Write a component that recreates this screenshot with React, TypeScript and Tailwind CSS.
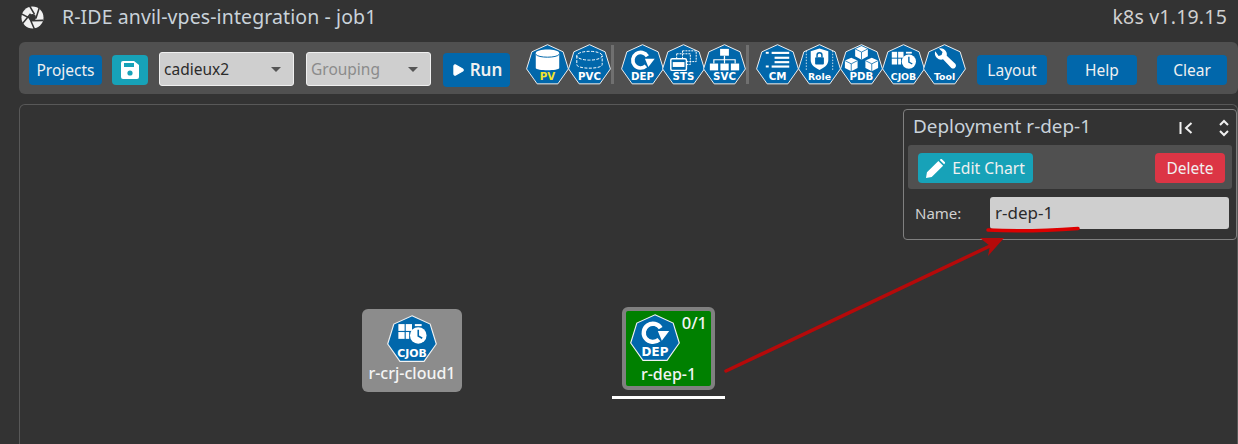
import * as React from "react"
import { Play } from "lucide-react"

function Hex({ label, labelClass = "fill-white", size = 43, children }: { label: string; labelClass?: string; size?: number; children?: React.ReactNode }) {
  return (
    <svg viewBox="0 0 44 42" width={size} height={(size * 42) / 44} className="shrink-0">
      <polygon points="22,0.7 38,8 43.4,25.5 32.6,40.8 11.4,40.8 0.6,25.5 6,8" fill="#0167ab" stroke="#f2f2f2" strokeWidth="1" />
      {children}
      <text x="22" y="36.8" textAnchor="middle" className={labelClass} fontFamily="'DejaVu Sans', sans-serif" fontWeight="700" fontSize={label.length > 3 ? 9.6 : 10.5}>
        {label}
      </text>
    </svg>
  )
}

function DepGlyph() {
  return (
    <g>
      <path d="M25.500 22.500A8 8 0 1 1 27 12.500" fill="none" stroke="#fff" strokeWidth="3.800" />
      <path d="M24.500 15H34.500L28 23.500z" fill="#fff" />
    </g>
  )
}

function CjobGlyph() {
  return (
    <g fill="#fff">
      <rect x="10" y="8" width="5.500" height="6" />
      <rect x="16.500" y="8" width="5.500" height="6" />
      <rect x="10" y="15" width="5.500" height="6" />
      <rect x="16.500" y="15" width="3" height="6" />
      <rect x="24.500" y="8" width="6" height="1.800" />
      <circle cx="27.500" cy="18" r="7.300" />
      <path d="M27.500 13v5.500l3.500 2" fill="none" stroke="#0167ab" strokeWidth="1.400" />
    </g>
  )
}

function Cube({ x, y }: { x: number; y: number }) {
  return (
    <g transform={`translate(${x} ${y})`}>
      <path d="M6.500 0l6.500 3v7.500L6.500 14 0 10.500V3z" fill="#fff" />
      <path d="M0 3l6.500 3.300L13 3M6.500 6.300V14" fill="none" stroke="#0167ab" strokeWidth="0.800" />
    </g>
  )
}

function HexBar() {
  return (
    <div className="flex items-center">
      <Hex label="PV" labelClass="fill-[#f2e52c]">
        <path d="M10 9.500c0-5 24-5 24 0v15c0 3-24 3-24 0z" fill="#fff" />
        <path d="M10 10.500c2 4 22 4 24 0" fill="none" stroke="#0167ab" strokeWidth="1" />
      </Hex>
      <div className="-ml-[1px]">
        <Hex label="PVC">
          <g fill="none" stroke="#fff" strokeWidth="1" strokeDasharray="3 1.500">
            <ellipse cx="22" cy="12" rx="13" ry="4.500" />
            <path d="M9 12v9c0 5 26 5 26 0v-9" />
          </g>
        </Hex>
      </div>
      <div className="mr-[7px] h-[39px] w-[3px] bg-[#707070]" />
      <Hex label="DEP">
        <DepGlyph />
      </Hex>
      <div className="-ml-[2px]">
        <Hex label="STS">
          <g fill="none" stroke="#fff" strokeWidth="1">
            <rect x="21" y="7" width="14" height="11" strokeDasharray="2 1" />
            <rect x="15" y="10" width="14" height="11" strokeDasharray="2 1" />
          </g>
          <rect x="9" y="15" width="16" height="12" rx="1.500" fill="#0167ab" stroke="#fff" strokeWidth="1.500" />
          <rect x="11" y="18.500" width="12" height="5" fill="#fff" />
        </Hex>
      </div>
      <div className="-ml-[2px]">
        <Hex label="SVC">
          <g fill="#fff">
            <rect x="17.500" y="5" width="9" height="7" />
            <rect x="7" y="20" width="8.500" height="7" />
            <rect x="17.800" y="20" width="8.500" height="7" />
            <rect x="28.500" y="20" width="8.500" height="7" />
            <path d="M21.400 12h1.200v3.500H33.500V20h-1.200v-3.300h-9.700V20h-1.200v-3.300h-9.700V20h-1.200v-4.500h10.700z" />
          </g>
        </Hex>
      </div>
      <div className="mr-[7px] h-[39px] w-[3px] bg-[#707070]" />
      <Hex label="CM">
        <g fill="#fff">
          <rect x="10" y="8" width="3" height="2" />
          <rect x="10" y="22" width="3" height="2" />
          <rect x="16" y="8" width="18" height="2.200" />
          <rect x="19" y="13" width="15" height="2.200" />
          <rect x="19" y="17.500" width="15" height="2.200" />
          <rect x="16" y="22" width="18" height="2.200" />
        </g>
      </Hex>
      <div className="-ml-[1px]">
        <Hex label="Role">
          <path d="M22 4.500l9 3v9c0 5-4 8-9 10-5-2-9-5-9-10v-9z" fill="#fff" />
          <rect x="17.500" y="13.500" width="9" height="7.500" rx="1" fill="#0167ab" />
          <path d="M19.500 13.500v-2a2.500 2.500 0 0 1 5 0v2" fill="none" stroke="#0167ab" strokeWidth="1.500" />
          <path d="M8.500 7v20M35.500 7v20" stroke="#fff" strokeWidth="0.800" strokeDasharray="1.500 1.500" />
        </Hex>
      </div>
      <div className="-ml-[1px]">
        <Hex label="PDB">
          <Cube x={15.500} y={2} />
          <Cube x={5} y={14} />
          <Cube x={26} y={14} />
        </Hex>
      </div>
      <div className="-ml-[1px]">
        <Hex label="CJOB">
          <CjobGlyph />
        </Hex>
      </div>
      <div className="-ml-[2px]">
        <Hex label="Tool">
          <path d="M12.500 7.500a6.500 6.500 0 0 0 8 8.200L29 24.500a3 3 0 0 0 4.300-4l-9-8.500a6.500 6.500 0 0 0-8-7.500l3.700 3.700-1 3-3 1z" fill="#fff" />
        </Hex>
      </div>
    </div>
  )
}

function BlueButton({ children, className = "" }: { children: React.ReactNode; className?: string }) {
  return <button type="button" className={`mt-[13px] h-[30px] rounded-[4px] bg-[#0167ab] pt-[2px] text-[15.500px] text-[#f0f0f0] ${className}`}>{children}</button>
}

function FakeSelect({ value, className }: { value: string; className: string }) {
  return (
    <div className={`mt-[10px] flex h-[34px] items-center justify-between rounded-[3px] border border-[#f0f0f0] bg-[#cfcfcf] pl-[4px] pr-[12px] text-[15.500px] ${className}`}>
      <span className="pt-[1px]">{value}</span>
      <span className="h-0 w-0 border-x-[5px] border-t-[5px] border-x-transparent border-t-[#555]" />
    </div>
  )
}

export default function App() {
  return (
    <div className="relative h-[444px] w-[1238px] overflow-hidden bg-[#333333] font-['Noto_Sans',sans-serif] text-[#d8d8d8]">
      <header className="flex h-[42px] items-start justify-between pl-[21px] pr-[11px] pt-[4px]">
        <div className="flex items-center gap-[18px]">
          <svg viewBox="0 0 24 24" width="23" height="23" className="mt-[1px]">
            <circle cx="12" cy="12" r="11.500" fill="#f0f0f0" />
            <g stroke="#333" strokeWidth="1.600">
              <path d="M14 8.500L9 0M15.500 13L19 2M11 15.500L23 15M8.500 11.500L14 24M10 8L1 19M13.500 15L0 8" />
            </g>
            <circle cx="12" cy="12" r="3.600" fill="#333" />
          </svg>
          <span className="text-[19.500px] leading-[26px] tracking-[0.1px] text-[#c9d2da]">R-IDE anvil-vpes-integration - job1</span>
        </div>
        <span className="text-[19.500px] leading-[26px] tracking-[0.2px] text-[#d0d0d0]">k8s v1.19.15</span>
      </header>

      <div className="ml-[19px] flex h-[52px] items-start rounded-[6px] bg-[#505050] pl-[10px]">
        <BlueButton className="w-[73px]">Projects</BlueButton>
        <button type="button" className="ml-[10px] mt-[13px] flex h-[30px] w-[36px] items-center justify-center rounded-[4px] bg-[#17a2b8]">
          <svg viewBox="0 0 18 18" width="18" height="18">
            <path d="M2 0h11l5 4v12a2 2 0 0 1-2 2H2a2 2 0 0 1-2-2V2a2 2 0 0 1 2-2z" fill="#fff" />
            <rect x="3" y="2" width="10" height="4" fill="#17a2b8" />
            <circle cx="9" cy="12" r="2.600" fill="#17a2b8" />
          </svg>
        </button>
        <FakeSelect value="cadieux2" className="ml-[11px] w-[135px] text-[#2b2b2b]" />
        <FakeSelect value="Grouping" className="ml-[12px] w-[125px] text-[#8b8b8b]" />
        <button type="button" className="ml-[12px] mt-[11px] flex h-[34px] w-[67px] items-center justify-center gap-[5px] rounded-[4px] bg-[#0167ab] text-[17px] font-semibold text-[#f0f0f0]">
          <Play size={14} fill="#fff" stroke="#fff" />
          Run
        </button>
        <div className="ml-[16px] mt-[2px]">
          <HexBar />
        </div>
        <BlueButton className="ml-[11px] w-[70px]">Layout</BlueButton>
        <BlueButton className="ml-[20px] w-[70px]">Help</BlueButton>
        <BlueButton className="ml-[20px] w-[70px]">Clear</BlueButton>
      </div>

      <main className="relative ml-[19px] mt-[10px] h-[360px] rounded-t-[6px] border border-b-0 border-[#585858]">
        <section className="absolute right-0 top-[4px] w-[334px] rounded-[4px] border border-[#808080] bg-[#333333] px-[4px]">
          <div className="flex h-[35px] items-center justify-between pb-[2px] pl-[5px] pr-[3px]">
            <span className="text-[18.900px] text-[#c9d2da]">Deployment r-dep-1</span>
            <div className="flex items-center gap-[26px] pt-[2px]">
              <svg viewBox="0 0 14 12" width="14" height="12" fill="none" stroke="#f0f0f0" strokeWidth="2">
                <path d="M1.500 0v12M12.500 1L7 6l5.500 5" />
              </svg>
              <svg viewBox="0 0 10 18" width="10" height="18" fill="none" stroke="#f0f0f0" strokeWidth="2">
                <path d="M1 6l4-4 4 4M1 12l4 4 4-4" />
              </svg>
            </div>
          </div>
          <div className="flex h-[44px] items-center justify-between rounded-[3px] bg-[#505050] pl-[10px] pr-[7px] pt-[2px]">
            <button type="button" className="flex h-[30px] w-[115px] items-center justify-center gap-[7px] rounded-[4px] bg-[#17a2b8] pt-[1px] text-[15.700px] text-[#f0f0f0]">
              <svg viewBox="0 0 20 20" width="19" height="19" fill="#fff">
                <path d="M0 20l1-6L13 2l5 5L6 19zM14.500 1l1-1h1l3.500 3.500v1l-1 1z" />
              </svg>
              Edit Chart
            </button>
            <button type="button" className="h-[30px] w-[70px] rounded-[4px] bg-[#dc3545] pt-[1px] text-[15.500px] text-[#f0f0f0]">Delete</button>
          </div>
          <div className="flex items-center pb-[10px] pt-[8px]">
            <span className="w-[82px] pl-[7px] text-[15px] text-[#d0d0d0]">Name:</span>
            <div className="flex h-[32px] w-[239px] items-center rounded-[3px] bg-[#cfcfcf] pl-[5px] text-[17px] text-[#2b2b2b]">r-dep-1</div>
          </div>
        </section>

        <div className="absolute left-[342px] top-[204px] flex h-[83px] w-[100px] flex-col items-center rounded-[6px] bg-[#8c8c8c] pt-[6px]">
          <Hex label="CJOB" size={50}>
            <CjobGlyph />
          </Hex>
          <span className="text-[16px] font-medium leading-[20px] text-[#f4f4f4]">r-crj-cloud1</span>
        </div>

        <div className="absolute left-[602px] top-[202px] h-[83px] w-[93px] rounded-[6px] border-[4px] border-[#808080] bg-[#008000]">
          <div className="absolute left-[4px] top-[3px]">
            <Hex label="DEP" size={50}>
              <DepGlyph />
            </Hex>
          </div>
          <span className="absolute right-[4px] top-[2px] text-[16.500px] font-medium leading-[20px] text-[#f4f4f4]">0/1</span>
          <span className="absolute inset-x-0 bottom-[2px] text-center text-[16px] font-medium leading-[20px] text-[#f4f4f4]">r-dep-1</span>
        </div>
        <div className="absolute left-[592px] top-[291px] h-[3px] w-[113px] bg-white" />
      </main>

      {/* hand drawn annotation on top of the screenshot */}
      <svg className="pointer-events-none absolute inset-0" width="1238" height="444" viewBox="0 0 1238 444">
        <path d="M988 230C1015 231.500 1050 230.500 1078 228.500" fill="none" stroke="#dd0000" strokeWidth="3.500" strokeLinecap="round" />
        <path d="M726 371L990 246" stroke="#b50a0a" strokeWidth="3.500" strokeLinecap="round" />
        <path d="M1004 238L980 238L990 246L988 256z" fill="#b50a0a" />
      </svg>
    </div>
  )
}
